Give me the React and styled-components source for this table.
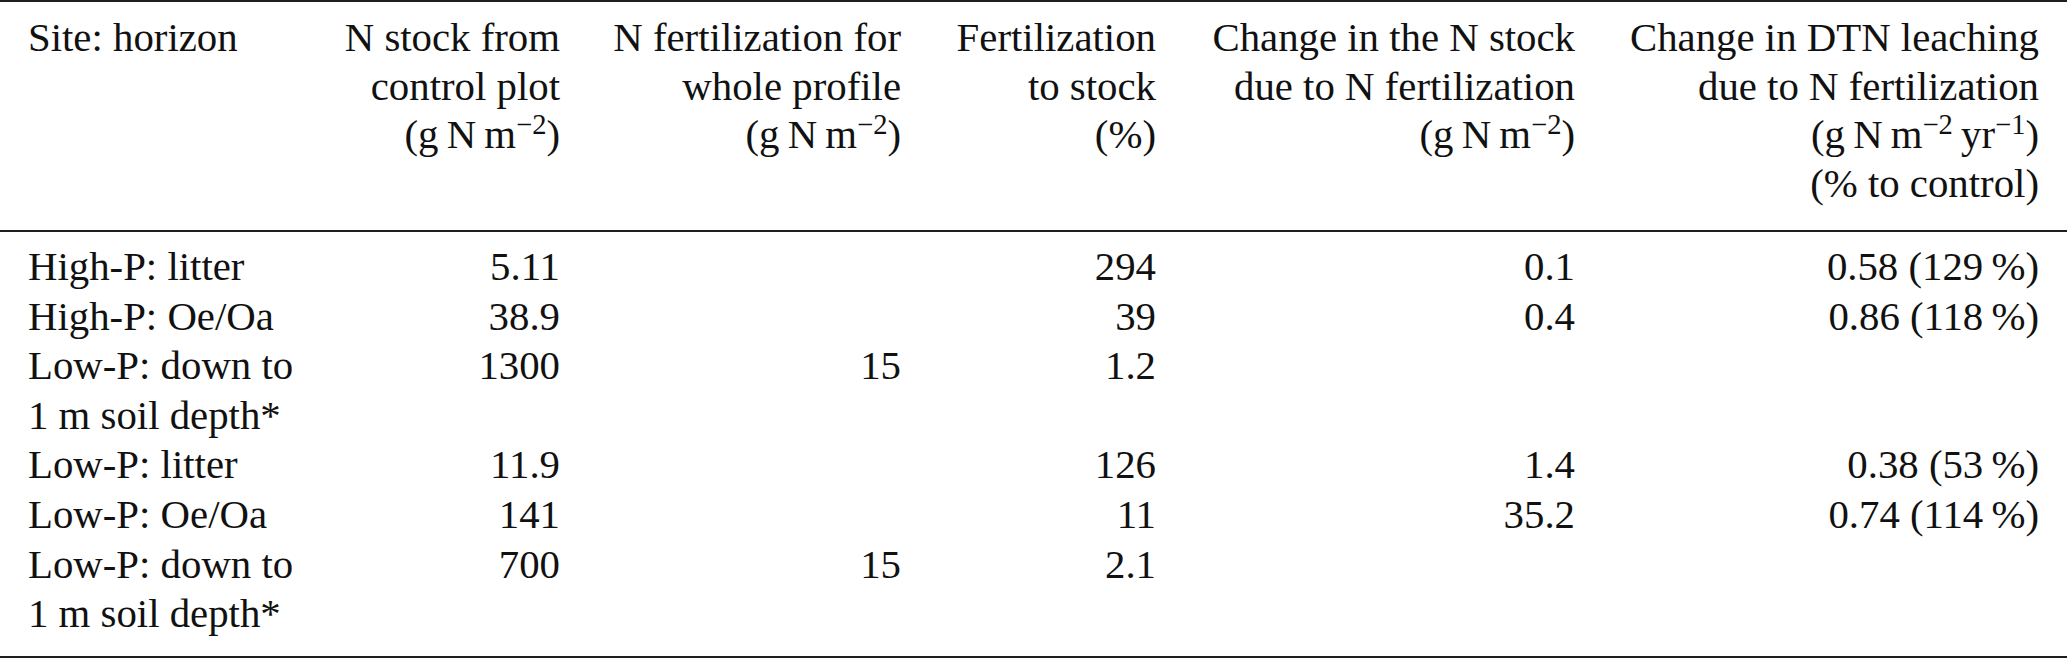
import styled, { createGlobalStyle } from 'styled-components';

const GlobalStyle = createGlobalStyle`
  html, body {
    margin: 0;
    padding: 0;
    background: #ffffff;
  }
  body {
    font-family: "Liberation Serif", "Times New Roman", serif;
    color: #111111;
  }
`;

const columns = [318, 270, 341, 255, 419, 464];

const header = [
  ['Site: horizon'],
  ['N stock from', 'control plot', 'unit'],
  ['N fertilization for', 'whole profile', 'unit'],
  ['Fertilization', 'to stock', '(%)'],
  ['Change in the N stock', 'due to N fertilization', 'unit'],
  ['Change in DTN leaching', 'due to N fertilization', 'unitYear', '(% to control)'],
];

const rows = [
  [['High-P: litter'], '5.11', '', '294', '0.1', '0.58 (129\u2009%)'],
  [['High-P: Oe/Oa'], '38.9', '', '39', '0.4', '0.86 (118\u2009%)'],
  [['Low-P: down to', '1 m soil depth*'], '1300', '15', '1.2', '', ''],
  [['Low-P: litter'], '11.9', '', '126', '1.4', '0.38 (53\u2009%)'],
  [['Low-P: Oe/Oa'], '141', '', '11', '35.2', '0.74 (114\u2009%)'],
  [['Low-P: down to', '1 m soil depth*'], '700', '15', '2.1', '', ''],
];

const Table = styled.table`
  width: 2067px;
  table-layout: fixed;
  border-collapse: collapse;
  border-top: 2px solid #1e1e1e;
  border-bottom: 2px solid #1e1e1e;
  font-family: "Liberation Serif", "Times New Roman", serif;
  font-size: 40.8px;
  color: #111111;
`;

const Head = styled.thead`
  border-bottom: 2px solid #1e1e1e;
`;

const HeadCell = styled.th`
  font-family: inherit;
  font-weight: 400;
  line-height: 48.5px;
  vertical-align: top;
  white-space: nowrap;
  text-align: ${(p) => (p.$left ? 'left' : 'right')};
  padding: 12px ${(p) => (p.$left ? '0' : '28px')} 22px ${(p) => (p.$left ? '28px' : '0')};
`;

const Body = styled.tbody`
  tr:first-child > td {
    padding-top: 10px;
  }
  tr:last-child > td {
    padding-bottom: 17px;
  }
`;

const Cell = styled.td`
  font-family: inherit;
  line-height: 49.6px;
  vertical-align: top;
  white-space: nowrap;
  text-align: ${(p) => (p.$left ? 'left' : 'right')};
  padding: 0 ${(p) => (p.$left ? '0' : '28px')} 0 ${(p) => (p.$left ? '28px' : '0')};
`;

const Line = styled.div`
  height: 1lh;
`;

const Sup = styled.sup`
  font-size: 0.7em;
  line-height: 0;
  vertical-align: 0.5em;
`;

const Unit = ({ year }) => (
  <>
    (g{'\u2009'}N{'\u2009'}m<Sup>−2</Sup>
    {year && (
      <>
        {'\u2009'}yr<Sup>−1</Sup>
      </>
    )}
    )
  </>
);

const renderHeadLine = (text) => {
  if (text === 'unit') return <Unit />;
  if (text === 'unitYear') return <Unit year />;
  return text;
};

export default function App() {
  return (
    <>
      <GlobalStyle />
      <Table>
        <colgroup>
          {columns.map((w, i) => (
            <col key={i} style={{ width: w }} />
          ))}
        </colgroup>
        <Head>
          <tr>
            {header.map((lines, i) => (
              <HeadCell key={i} $left={i === 0}>
                {lines.map((line, j) => (
                  <Line key={j}>{renderHeadLine(line)}</Line>
                ))}
              </HeadCell>
            ))}
          </tr>
        </Head>
        <Body>
          {rows.map((row, r) => (
            <tr key={r}>
              <Cell $left>
                {row[0].map((line, j) => (
                  <Line key={j}>{line}</Line>
                ))}
              </Cell>
              {row.slice(1).map((value, c) => (
                <Cell key={c}>
                  <Line>{value}</Line>
                </Cell>
              ))}
            </tr>
          ))}
        </Body>
      </Table>
    </>
  );
}
